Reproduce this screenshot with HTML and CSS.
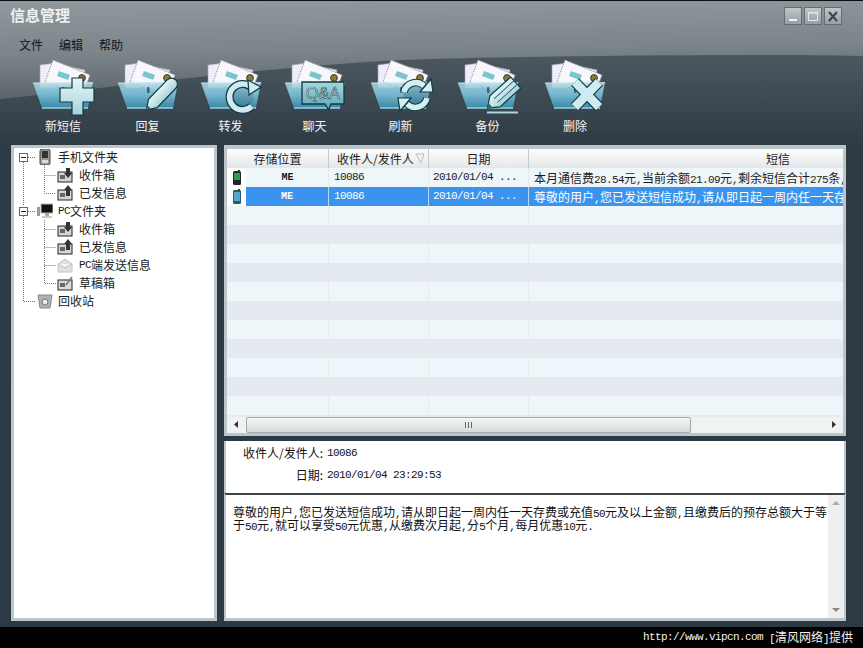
FILE: index.html
```html
<!DOCTYPE html>
<html lang="zh-CN">
<head>
<meta charset="utf-8">
<title>信息管理</title>
<link rel="stylesheet" href="styles.css">
</head>
<body>
<svg class="sprite" aria-hidden="true">
  <defs>
    <linearGradient id="gFolder" x1="0" y1="0" x2="0" y2="1">
      <stop offset="0" stop-color="#b4dde9" stop-opacity=".82"/>
      <stop offset=".45" stop-color="#78b9d0"/>
      <stop offset="1" stop-color="#3a87a6"/>
    </linearGradient>
    <linearGradient id="gOver" x1="0" y1="0" x2="0" y2="1">
      <stop offset="0" stop-color="#e6f6f8"/>
      <stop offset="1" stop-color="#a6d3db"/>
    </linearGradient>
    <linearGradient id="gBubble" x1="0" y1="0" x2="0" y2="1">
      <stop offset="0" stop-color="#a6d6dc"/>
      <stop offset="1" stop-color="#5da6b4"/>
    </linearGradient>
    <linearGradient id="gDisc" x1="0" y1="0" x2="0" y2="1">
      <stop offset="0" stop-color="#8db9c9"/>
      <stop offset="1" stop-color="#2f7b98"/>
    </linearGradient>
    <symbol id="folder" viewBox="0 0 66 56">
      <polygon points="10,7 25,5 26,30 10,30" fill="#efedf7" stroke="#a5a4b2" stroke-dasharray="1.5 1"/>
      <polygon points="36,8 55,12 52,30 34,28" fill="#e2e0ec" stroke="#a5a4b2" stroke-dasharray="1.5 1"/>
      <polygon points="23,2 60,17 52,38 15,24" fill="#f8f7fc" stroke="#9c9bab" stroke-dasharray="1.5 1"/>
      <polygon points="29,13 40,17 38,22 27,18" fill="#79c6cf"/>
      <circle cx="52" cy="20" r="3.4" fill="#8a7a3c" stroke="#3d3a28"/>
      <polygon points="3,25 63,24 58,50 12,50" fill="url(#gFolder)"/>
      <path d="M12 50 H58" stroke="#94d5e8" stroke-width="1.5"/>
      <path d="M3 25 H63" stroke="#c5e6ee" stroke-width="1"/>
      <rect x="32" y="29" width="2.5" height="6" rx="1" fill="#3f6274"/>
    </symbol>
    <symbol id="i-in" viewBox="0 0 16 16">
      <rect x="1" y="5" width="14" height="10" fill="#d6d6d0" stroke="#222"/>
      <rect x="3" y="8" width="5" height="4" fill="#666"/>
      <path d="M9 1h4v5h2l-4 5-4-5h2z" fill="#333"/>
    </symbol>
    <symbol id="i-out" viewBox="0 0 16 16">
      <rect x="1" y="5" width="14" height="10" fill="#d6d6d0" stroke="#222"/>
      <rect x="3" y="8" width="5" height="4" fill="#666"/>
      <path d="M11 0l4 5h-2v6H9V5H7z" fill="#333"/>
    </symbol>
    <symbol id="i-draft" viewBox="0 0 16 16">
      <rect x="1" y="5" width="14" height="10" fill="#dcdcd6" stroke="#222"/>
      <rect x="3" y="8" width="5" height="4" fill="#666"/>
      <path d="M9 10l6-8" stroke="#777" stroke-width="1.5"/>
    </symbol>
    <symbol id="i-mail" viewBox="0 0 16 16">
      <polygon points="1,7 8,2 15,7 15,15 1,15" fill="#e2e2e0" stroke="#c4c4c0"/>
      <path d="M1 7l7 4 7-4" fill="#f4f4f2" stroke="#bcbcb8"/>
    </symbol>
    <symbol id="i-phone" viewBox="0 0 16 16">
      <rect x="3" y="0" width="10" height="16" rx="2" fill="#9a9a90" stroke="#444"/>
      <rect x="5" y="2" width="6" height="7" fill="#333"/>
      <rect x="5" y="11" width="6" height="3" fill="#ddd"/>
    </symbol>
    <symbol id="i-pc" viewBox="0 0 16 16">
      <rect x="4" y="1" width="12" height="9" fill="#111" stroke="#bbb"/>
      <rect x="8" y="10" width="4" height="3" fill="#aaa"/>
      <rect x="5" y="13" width="10" height="2" fill="#ccc"/>
      <rect x="0" y="4" width="3" height="9" fill="#999"/>
    </symbol>
    <symbol id="i-bin" viewBox="0 0 16 16">
      <path d="M1 2h14l-2 13H3z" fill="#b0b4b0" stroke="#888"/>
      <circle cx="8" cy="9" r="3" fill="#e8e8e4" stroke="#777"/>
    </symbol>
    <symbol id="i-cell-g" viewBox="0 0 8 15">
      <rect x="0" y="1" width="8" height="14" rx="1.5" fill="#223"/>
      <rect x="1" y="3" width="6" height="7" fill="#2f9c4e"/>
      <rect x="5" y="0" width="2" height="2" fill="#333"/>
    </symbol>
    <symbol id="i-cell-b" viewBox="0 0 8 15">
      <rect x="0" y="1" width="8" height="14" rx="1.5" fill="#2a5a70"/>
      <rect x="1" y="3" width="6" height="9" fill="#56a6c8"/>
      <rect x="5" y="0" width="2" height="2" fill="#345"/>
    </symbol>
  </defs>
</svg>

<div class="app">
  <div class="window">
    <svg class="window-bg" viewBox="0 0 863 626" preserveAspectRatio="none" aria-hidden="true">
      <defs>
        <linearGradient id="gTop" x1="0" y1="0" x2=".12" y2="1">
          <stop offset="0" stop-color="#8f999e"/>
          <stop offset=".55" stop-color="#7b8489"/>
          <stop offset="1" stop-color="#5a6368"/>
        </linearGradient>
        <linearGradient id="gDark" x1="0" y1="0" x2="0" y2="1">
          <stop offset="0" stop-color="#4e5a62"/>
          <stop offset=".16" stop-color="#2f3b44"/>
          <stop offset="1" stop-color="#2e3a43"/>
        </linearGradient>
      </defs>
      <rect x="0" y="50" width="863" height="576" fill="url(#gDark)"/>
      <path d="M0 98 C130 84 300 62 430 58 C600 54 760 53 863 55 V0 H0Z" fill="url(#gTop)"/>
    </svg>

    <header class="titlebar">
      <h1 class="title">信息管理</h1>
      <div class="win-btns">
        <span class="win-btn"><svg width="16" height="15"><path d="M4 11h8" stroke="#f0f2f3" stroke-width="2"/></svg></span>
        <span class="win-btn"><svg width="16" height="15"><rect x="3.5" y="3.5" width="9" height="8" fill="none" stroke="#e6e9ea"/><path d="M3 4h10" stroke="#e6e9ea"/></svg></span>
        <span class="win-btn"><svg width="16" height="15"><path d="M4 3l8 9M12 3l-8 9" stroke="#3c4347" stroke-width="2"/></svg></span>
      </div>
    </header>

    <nav class="menu">
      <span>文件</span><span>编辑</span><span>帮助</span>
    </nav>

    <div class="toolbar">
      <div class="tool">
        <svg class="tool-ic" viewBox="0 0 66 56"><use href="#folder" width="66" height="56"/>
          <path d="M42 20h11v10h11v14H53v13H42V44H30V30h12z" fill="url(#gOver)" stroke="#0f3a40" stroke-width="1.2"/></svg>
        <span class="tool-label">新短信</span>
      </div>
      <div class="tool">
        <svg class="tool-ic" viewBox="0 0 66 56"><use href="#folder" width="66" height="56"/>
          <g transform="translate(31.5 52) rotate(-46)">
            <path d="M0 0L9-6H36a6 6 0 0 1 0 12H9z" fill="url(#gOver)" stroke="#0f3a40" stroke-width="1.2"/>
            <path d="M0 0L4-2.6V2.6z" fill="#2a6b62"/>
          </g></svg>
        <span class="tool-label">回复</span>
      </div>
      <div class="tool">
        <svg class="tool-ic" viewBox="0 0 66 56"><use href="#folder" width="66" height="56"/>
          <circle cx="44.5" cy="39" r="11" fill="url(#gDisc)"/>
          <path d="M54.5 30.6A13 13 0 1 0 53.7 48.2" fill="none" stroke="#0f3a40" stroke-width="8"/>
          <path d="M54.5 30.6A13 13 0 1 0 53.7 48.2" fill="none" stroke="#cfeaf0" stroke-width="5.5"/>
          <polygon points="50,22 63,29 51,37" fill="#cfeaf0" stroke="#0f3a40" stroke-width="1.2"/></svg>
        <span class="tool-label">转发</span>
      </div>
      <div class="tool">
        <svg class="tool-ic" viewBox="0 0 66 56"><use href="#folder" width="66" height="56"/>
          <path d="M20 24H62V46H49L46.5 52 43 46H20z" fill="url(#gBubble)" stroke="#0f3a40" stroke-width="1.3"/>
          <text class="qa" x="41" y="41">Q&amp;A</text></svg>
        <span class="tool-label">聊天</span>
      </div>
      <div class="tool">
        <svg class="tool-ic" viewBox="0 0 66 56"><use href="#folder" width="66" height="56"/>
          <circle cx="47.5" cy="37" r="12" fill="url(#gDisc)"/>
          <g id="refresh-arm">
            <path d="M36 34A12 12 0 0 1 56 28" fill="none" stroke="#0f3a40" stroke-width="7.5"/>
            <path d="M36 34A12 12 0 0 1 56 28" fill="none" stroke="#d5eef2" stroke-width="5.5"/>
            <polygon points="52,34 65,34 63,21" fill="#d5eef2" stroke="#0f3a40" stroke-width="1.2"/>
          </g>
          <use href="#refresh-arm" transform="rotate(180 47.5 37)"/></svg>
        <span class="tool-label">刷新</span>
      </div>
      <div class="tool">
        <svg class="tool-ic" viewBox="0 0 66 56"><use href="#folder" width="66" height="56"/>
          <g transform="translate(32.5 50) rotate(-42)">
            <path d="M0 0L10-7.5H38V7.5H10z" fill="url(#gOver)" stroke="#0f3a40" stroke-width="1.2"/>
            <path d="M11-2.5H38M11 2.5H38" stroke="#2a6b72"/>
            <path d="M0 0L4-3V3z" fill="#2a6b62"/>
          </g>
          <path d="M32 54.5H63" stroke="#a9d9dc" stroke-width="2"/></svg>
        <span class="tool-label">备份</span>
      </div>
      <div class="tool">
        <svg class="tool-ic" viewBox="0 0 66 56"><use href="#folder" width="66" height="56"/>
          <path d="M33 24L57 49M57 24L33 49" stroke="#0f3a40" stroke-width="11"/>
          <path d="M33 24L57 49M57 24L33 49" stroke="#cfeaf0" stroke-width="8.6"/></svg>
        <span class="tool-label">删除</span>
      </div>
    </div>

    <main class="main">
      <aside class="tree">
        <svg class="tree-lines" width="200" height="170" aria-hidden="true">
          <path class="dots" d="M9.5 13V57M9.5 67V152.5H22M14 8.5H22M14 62.5H22M30.5 16V44.5H42M30.5 26.5H42M30.5 71V134.5H42M30.5 80.5H42M30.5 98.5H42M30.5 116.5H42"/>
          <rect class="box" x="5.5" y="4.5" width="8" height="8"/><path class="minus" d="M7 8.5h5"/>
          <rect class="box" x="5.5" y="58.5" width="8" height="8"/><path class="minus" d="M7 62.5h5"/>
        </svg>
        <div class="tree-row root"><svg class="node"><use href="#i-phone" width="16" height="16"/></svg>手机文件夹</div>
        <div class="tree-row child"><svg class="node"><use href="#i-in" width="16" height="16"/></svg>收件箱</div>
        <div class="tree-row child"><svg class="node"><use href="#i-out" width="16" height="16"/></svg>已发信息</div>
        <div class="tree-row root"><svg class="node"><use href="#i-pc" width="16" height="16"/></svg><span class="lat">PC</span>文件夹</div>
        <div class="tree-row child"><svg class="node"><use href="#i-in" width="16" height="16"/></svg>收件箱</div>
        <div class="tree-row child"><svg class="node"><use href="#i-out" width="16" height="16"/></svg>已发信息</div>
        <div class="tree-row child"><svg class="node"><use href="#i-mail" width="16" height="16"/></svg><span class="lat">PC</span>端发送信息</div>
        <div class="tree-row child"><svg class="node"><use href="#i-draft" width="16" height="16"/></svg>草稿箱</div>
        <div class="tree-row root"><svg class="node"><use href="#i-bin" width="16" height="16"/></svg>回收站</div>
      </aside>

      <section class="content">
        <div class="list">
          <div class="list-head">
            <div class="th">存储位置</div>
            <div class="th th-sorted">收件人/发件人<svg class="sort" width="10" height="11"><path d="M1 1h8L6 10z" fill="none" stroke="#bbb"/></svg></div>
            <div class="th">日期</div>
            <div class="th">短信</div>
          </div>
          <div class="rows">
            <div class="row">
              <div class="td ic"><svg width="8" height="15"><use href="#i-cell-g" width="8" height="15"/></svg></div>
              <div class="td me">ME</div><div class="td num">10086</div><div class="td num date">2010/01/04 ...</div>
              <div class="td msg">本月通信费<span class="lat">28.54</span>元<span class="cm">,</span>当前余额<span class="lat">21.09</span>元<span class="cm">,</span>剩余短信合计<span class="lat">275</span>条<span class="cm">,</span></div>
            </div>
            <div class="row sel">
              <div class="td ic"><svg width="8" height="15"><use href="#i-cell-b" width="8" height="15"/></svg></div>
              <div class="td me">ME</div><div class="td num">10086</div><div class="td num date">2010/01/04 ...</div>
              <div class="td msg">尊敬的用户<span class="cm">,</span>您已发送短信成功<span class="cm">,</span>请从即日起一周内任一天存</div>
            </div>
            <div class="row"></div><div class="row"></div><div class="row"></div><div class="row"></div><div class="row"></div>
            <div class="row"></div><div class="row"></div><div class="row"></div><div class="row"></div><div class="row"></div>
            <div class="row"></div><div class="row"></div>
          </div>
          <div class="hscroll">
            <svg class="arrow" width="19" height="16"><path d="M11 4v7L7 7.5z" fill="#333"/></svg>
            <div class="hthumb"><svg width="9" height="8"><path d="M1.5 1v6M4.5 1v6M7.5 1v6" stroke="#666"/></svg></div>
            <svg class="arrow" width="19" height="16"><path d="M8 4v7L12 7.5z" fill="#333"/></svg>
          </div>
        </div>

        <div class="detail">
          <div class="label">收件人/发件人:</div><div class="value">10086</div>
          <div class="label">日期:</div><div class="value">2010/01/04 23:29:53</div>
        </div>

        <div class="message">
          <div class="message-text">尊敬的用户<span class="cm">,</span>您已发送短信成功<span class="cm">,</span>请从即日起一周内任一天存费或充值<span class="lat">50</span>元及以上金额<span class="cm">,</span>且缴费后的预存总额大于等<br>于<span class="lat">50</span>元<span class="cm">,</span>就可以享受<span class="lat">50</span>元优惠<span class="cm">,</span>从缴费次月起<span class="cm">,</span>分<span class="lat">5</span>个月<span class="cm">,</span>每月优惠<span class="lat">10</span>元<span class="lat">.</span></div>
          <div class="vscroll">
            <svg width="16" height="16"><path d="M4 10h8L8 6z" fill="#aaa"/></svg>
            <svg width="16" height="16"><path d="M4 6h8l-4 4z" fill="#888"/></svg>
          </div>
        </div>
      </section>
    </main>
  </div>

  <footer class="credit"><span class="lat">http://www.vipcn.com</span><span class="credit-note"><span class="lat">[</span>清风网络<span class="lat">]</span>提供</span></footer>
</div>
</body>
</html>
```

FILE: styles.css
```css
* { box-sizing: border-box; }
html, body { margin: 0; padding: 0; background: #000; }
body {
  font-family: "Noto Sans CJK SC", "Liberation Sans", sans-serif;
  font-size: 12px;
  line-height: 1;
  color: #111;
}
.sprite { position: absolute; width: 0; height: 0; }

.app { width: 863px; height: 648px; display: flex; flex-direction: column; overflow: hidden; }
.window {
  position: relative;
  height: 626px;
  display: flex;
  flex-direction: column;
  border-top: 1px solid #0c1013;
  border-left: 1px solid #1d262c;
  border-right: 1px solid #141a1e;
  background: #2e3a43;
}
.window-bg { position: absolute; left: -1px; top: 0; width: 863px; height: 626px; }
.titlebar, .menu, .toolbar, .main { position: relative; }

.titlebar {
  height: 28px;
  padding: 6px 20px 0 9px;
  display: flex;
  justify-content: space-between;
  align-items: flex-start;
}
.title {
  margin: 0;
  font-size: 15px;
  line-height: 16px;
  font-weight: 700;
  color: #eef1f2;
}
.win-btns { display: flex; gap: 2px; }
.win-btn {
  width: 18px;
  height: 18px;
  display: flex;
  align-items: center;
  justify-content: center;
  background: linear-gradient(#c0c6c9, #979fa3);
  border: 1px solid #656e73;
}

.menu {
  height: 29px;
  padding: 9px 0 0 18px;
  display: flex;
  gap: 16px;
  align-items: flex-start;
  line-height: 14px;
  color: #10161a;
}

.toolbar {
  height: 87px;
  margin-left: 19px;
  display: grid;
  grid-template-columns: 86px 83px 83px 85px 87px 87px 88px;
  justify-content: start;
}
.tool { display: flex; flex-direction: column; align-items: center; }
.tool-ic { width: 66px; height: 56px; overflow: visible; }
.tool-label { height: 24px; line-height: 24px; color: #f2f5f6; }
.qa {
  font-family: "Liberation Sans", sans-serif;
  font-size: 16px;
  text-anchor: middle;
  fill: #eef9fa;
  stroke: #1f5a66;
  stroke-width: .7px;
}

.main {
  flex: 1;
  display: flex;
  gap: 7px;
  padding: 0 0 5px 10px;
  min-height: 0;
}
.tree {
  position: relative;
  width: 206px;
  background: #fff;
  border: 3px solid #bcc5ca;
  color: #1a1a1a;
}
.tree-lines { position: absolute; left: 0; top: 1px; }
.dots { fill: none; stroke: #777; stroke-dasharray: 1 1; }
.box { fill: #fff; stroke: #666; }
.minus { stroke: #222; }
.tree-row {
  position: relative;
  height: 18px;
  display: flex;
  align-items: center;
}
.tree-row.root { padding-left: 23px; }
.tree-row.child { padding-left: 43px; }
.node { width: 16px; height: 16px; flex: none; margin-right: 5px; }
.tree-row.child .node { margin-right: 6px; }

.lat, .cm, .num, .value {
  font-family: "Liberation Mono", monospace;
  font-size: 11px;
  letter-spacing: -.6px;
}
.lat, .cm { line-height: 0; }
.cm { display: inline-block; width: 6px; }

.content { width: 622px; display: flex; flex-direction: column; min-width: 0; }

.list {
  height: 291px;
  background: #eff6f9;
  border: 3px solid #bcc5ca;
  border-top-width: 4px;
  display: flex;
  flex-direction: column;
  overflow: hidden;
}
.list-head {
  height: 19px;
  flex: none;
  display: grid;
  grid-template-columns: 102px 100px 100px 498px;
  overflow: hidden;
  background: linear-gradient(#fdfdfd, #e4e7e9);
}
.th {
  display: flex;
  align-items: center;
  justify-content: center;
  border-right: 1px solid #c5cacd;
  line-height: 19px;
  color: #1c1c1c;
}
.th:last-child { border-right: 0; }
.th-sorted { justify-content: flex-start; padding-left: 8px; }
.sort { flex: none; margin-left: 1px; }

.rows { height: 249px; flex: none; overflow: hidden; }
.row {
  height: 19px;
  display: grid;
  grid-template-columns: 19px 83px 100px 100px 1fr;
  background-image: linear-gradient(90deg, transparent 101px, #e4eaee 101px, #e4eaee 102px, transparent 102px, transparent 201px, #e4eaee 201px, #e4eaee 202px, transparent 202px, transparent 301px, #e4eaee 301px, #e4eaee 302px, transparent 302px);
}
.row:nth-child(even) { background-color: #e5eaf0; }
.td {
  line-height: 19px;
  white-space: nowrap;
  overflow: hidden;
  padding-left: 6px;
  color: #1b1b1b;
}
.td.num { padding-left: 5px; }
.td.date { padding-left: 4px; }
.td.ic {
  display: flex;
  align-items: center;
  padding-left: 6px;
  background: #fbfdfd;
}
.td.me {
  padding-left: 0;
  text-align: center;
  font-family: "Liberation Mono", monospace;
  font-size: 10px;
  font-weight: 700;
}
.td.msg { padding-left: 5px; }
.row.sel {
  background-color: #3a94ee;
  background-image: none;
}
.row.sel .td { color: #fff; border-right: 1px solid #b7d8f8; }
.row.sel .td.ic { border-right: 0; color: #111; }
.row.sel .td.msg { border-right: 0; }

.hscroll {
  height: 16px;
  flex: none;
  display: flex;
  background: #f1f2f2;
}
.arrow { flex: none; }
.hthumb {
  width: 445px;
  margin-right: auto;
  display: flex;
  align-items: center;
  justify-content: center;
  background: linear-gradient(#f4f5f5, #d7dadb);
  border: 1px solid #a4a9ac;
  border-radius: 2px;
}

.detail {
  height: 52px;
  margin-top: 5px;
  flex: none;
  display: grid;
  grid-template-columns: 97px 1fr;
  grid-auto-rows: 22px;
  column-gap: 4px;
  align-content: start;
  padding-top: 1px;
  background: #fff;
  border-left: 2px solid #bcc5ca;
  border-right: 2px solid #bcc5ca;
  align-items: center;
}
.label { text-align: right; line-height: 22px; }
.value { line-height: 22px; }

.message {
  flex: 1;
  min-height: 0;
  display: flex;
  background: #fff;
  border-top: 2px solid #3a444a;
  border-left: 2px solid #bcc5ca;
  border-right: 2px solid #bcc5ca;
  border-bottom: 3px solid #bcc5ca;
}
.message-text {
  flex: 1;
  padding: 10px 0 0 7px;
  line-height: 13px;
  white-space: nowrap;
  overflow: hidden;
}
.vscroll {
  width: 16px;
  flex: none;
  display: flex;
  flex-direction: column;
  justify-content: space-between;
  background: #efefef;
}

.credit {
  flex: 1;
  display: flex;
  align-items: center;
  justify-content: flex-end;
  gap: 6px;
  padding-right: 10px;
  background: #000;
  color: #f2f2f2;
}
.credit-note { white-space: nowrap; }
```
